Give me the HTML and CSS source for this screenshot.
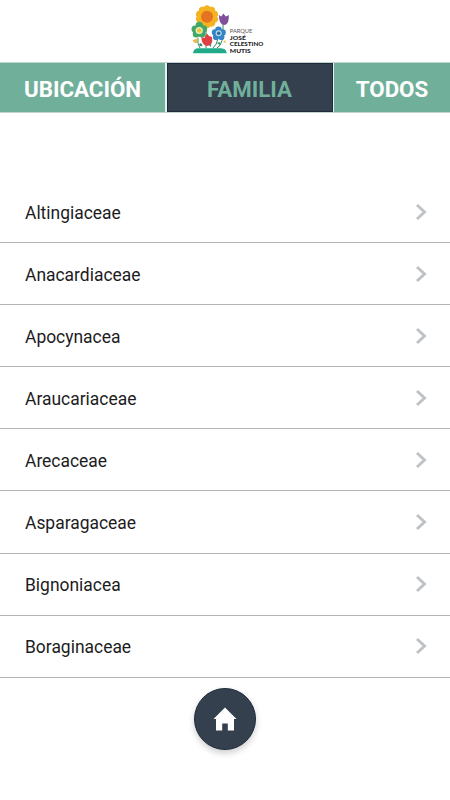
FILE: index.html
```html
<!DOCTYPE html>
<html lang="es">
<head>
<meta charset="utf-8">
<title>Parque José Celestino Mutis</title>
<link rel="stylesheet" href="styles.css">
</head>
<body>
<header class="header">
  <svg class="logo" width="80" height="56" viewBox="188 0 80 56">
    <path class="stem" d="M206 48V25M200 48Q197 44 198 38M213 48Q217 45 218 38M217 48Q224 45 223 24"/>
    <g class="sun">
      <ellipse id="petal" cx="207" cy="9" rx="3.4" ry="3.8"/>
      <use href="#petal" transform="rotate(36 207 16.7)"/>
      <use href="#petal" transform="rotate(72 207 16.7)"/>
      <use href="#petal" transform="rotate(108 207 16.7)"/>
      <use href="#petal" transform="rotate(144 207 16.7)"/>
      <use href="#petal" transform="rotate(180 207 16.7)"/>
      <use href="#petal" transform="rotate(216 207 16.7)"/>
      <use href="#petal" transform="rotate(252 207 16.7)"/>
      <use href="#petal" transform="rotate(288 207 16.7)"/>
      <use href="#petal" transform="rotate(324 207 16.7)"/>
      <circle cx="207" cy="16.7" r="8.5"/>
    </g>
    <circle cx="207" cy="16.7" r="6" fill="#e5731f"/>
    <path d="M218.9 15L221.3 16.5L223.4 13.5L225.8 16.5L228.8 15Q229.3 24.6 224.3 25Q218.8 24.8 218.9 15Z" fill="#82509b"/>
    <g fill="#43a765">
      <circle cx="199.3" cy="25.5" r="3.7"/><circle cx="203.5" cy="29" r="3.7"/><circle cx="202" cy="34" r="3.6"/><circle cx="196.3" cy="34" r="3.6"/><circle cx="195" cy="29" r="3.5"/>
    </g>
    <circle cx="199.2" cy="30.5" r="3.6" fill="#e8efc9"/><circle cx="199.2" cy="30.5" r="2.3" fill="#f1c52f"/>
    <g fill="#3485c4">
      <circle cx="218.5" cy="29.8" r="3.3"/><circle cx="222.6" cy="32.4" r="3.2"/><circle cx="221.4" cy="37" r="3.1"/><circle cx="216" cy="37" r="3.1"/><circle cx="214.9" cy="32.4" r="3.1"/>
    </g>
    <circle cx="218.7" cy="33.3" r="3" fill="#b7d9ed"/><circle cx="218.7" cy="33.3" r="1.8" fill="#286b9d"/>
    <path d="M201.5 37L204.5 38L207 33.5L209 36L212 37Q213.5 45.5 207 46Q201 44.5 201.5 37Z" fill="#df3f43"/>
    <path d="M193 40L197.5 38.5L197 43Q193 43.5 193 40ZM223 42L225.5 40V43Z" fill="#f0b83a"/>
    <path d="M199 44Q202 42 202.5 46Q200 47 199 44ZM209 45Q212 43 211 47ZM217 43Q221 41 220 45Z" fill="#328b65"/>
    <path d="M193 53.2Q193.5 48 199 48.2H221Q226.3 48.4 226.8 53.2Z" fill="#21aa88"/>
    <g class="brand">
      <text class="brand-light" x="229.8" y="32.8" textLength="22.5" lengthAdjust="spacingAndGlyphs">PARQUE</text>
      <text x="229.8" y="39.5" textLength="16" lengthAdjust="spacingAndGlyphs">JOSÉ</text>
      <text x="229.8" y="46.3" textLength="33.5" lengthAdjust="spacingAndGlyphs">CELESTINO</text>
      <text x="229.8" y="53" textLength="21" lengthAdjust="spacingAndGlyphs">MUTIS</text>
    </g>
  </svg>
</header>
<nav class="tabs">
  <a class="tab">UBICACIÓN</a>
  <a class="tab active">FAMILIA</a>
  <a class="tab">TODOS</a>
</nav>
<main class="list">
  <div class="row"><span>Altingiaceae</span><svg class="chevron" viewBox="0 0 12 18"><path d="M2 2L9.5 9L2 16"/></svg></div>
  <div class="row"><span>Anacardiaceae</span><svg class="chevron" viewBox="0 0 12 18"><path d="M2 2L9.5 9L2 16"/></svg></div>
  <div class="row"><span>Apocynacea</span><svg class="chevron" viewBox="0 0 12 18"><path d="M2 2L9.5 9L2 16"/></svg></div>
  <div class="row"><span>Araucariaceae</span><svg class="chevron" viewBox="0 0 12 18"><path d="M2 2L9.5 9L2 16"/></svg></div>
  <div class="row"><span>Arecaceae</span><svg class="chevron" viewBox="0 0 12 18"><path d="M2 2L9.5 9L2 16"/></svg></div>
  <div class="row"><span>Asparagaceae</span><svg class="chevron" viewBox="0 0 12 18"><path d="M2 2L9.5 9L2 16"/></svg></div>
  <div class="row"><span>Bignoniacea</span><svg class="chevron" viewBox="0 0 12 18"><path d="M2 2L9.5 9L2 16"/></svg></div>
  <div class="row"><span>Boraginaceae</span><svg class="chevron" viewBox="0 0 12 18"><path d="M2 2L9.5 9L2 16"/></svg></div>
</main>
<footer class="footer">
  <a class="home" aria-label="Inicio"><svg width="24" height="24" viewBox="0 0 24 24"><path d="M12 .5L.5 12H3V23.5H9.2V16.5H14.8V23.5H21V12H23.5Z" fill="#fff"/></svg></a>
</footer>
</body>
</html>
```

FILE: styles.css
```css
* { box-sizing: border-box; }
body {
  margin: 0;
  height: 800px;
  overflow: hidden;
  background: #fff;
  color: #1c1c1e;
  font-family: Roboto, sans-serif;
}
.header {
  height: 62px;
  padding-left: 188px;
}
.logo { display: block; }
.stem { fill: none; stroke: #328b65; stroke-width: 1; }
.sun { fill: #f4b322; }
.brand { font-family: Lato, sans-serif; font-size: 6px; font-weight: 900; fill: #252525; }
.brand-light { font-weight: 400; fill: #555; }
.tabs {
  display: grid;
  grid-template-columns: 165px 166px 116px;
  column-gap: 1.5px;
  height: 51px;
  padding: 1px 0;
  border-top: 0;
  background: linear-gradient(#c3d2cd 1px, #e9f1f0 1px, #e9f1f0 50px, #c3d2cd 50px);
}
.tab {
  display: flex;
  align-items: center;
  justify-content: center;
  padding-top: 3px;
  background: #70af9a;
  color: #fff;
  font-size: 22.3px;
  font-weight: 700;
}
.active { background: #34404e; color: #70af9a; border: 1px solid #1c2a3b; }
.list { padding-top: 68px; }
.row {
  display: flex;
  align-items: center;
  justify-content: space-between;
  height: 62.1px;
  padding: 0 23px 0 25px;
  border-bottom: 1px solid #b3b3b3;
  font-size: 17.45px;
}
.row span { padding-top: 2px; }
.chevron {
  width: 12px;
  height: 18px;
  fill: none;
  stroke: #bfc3c7;
  stroke-width: 3;
}
.footer {
  display: flex;
  justify-content: center;
  padding-top: 10px;
}
.home {
  display: flex;
  align-items: center;
  justify-content: center;
  width: 62px;
  height: 62px;
  border: 1px solid #1d2d3d;
  border-radius: 50%;
  background: #34404e;
  box-shadow: 0 3px 6px rgba(0, 0, 0, .2);
}
```
